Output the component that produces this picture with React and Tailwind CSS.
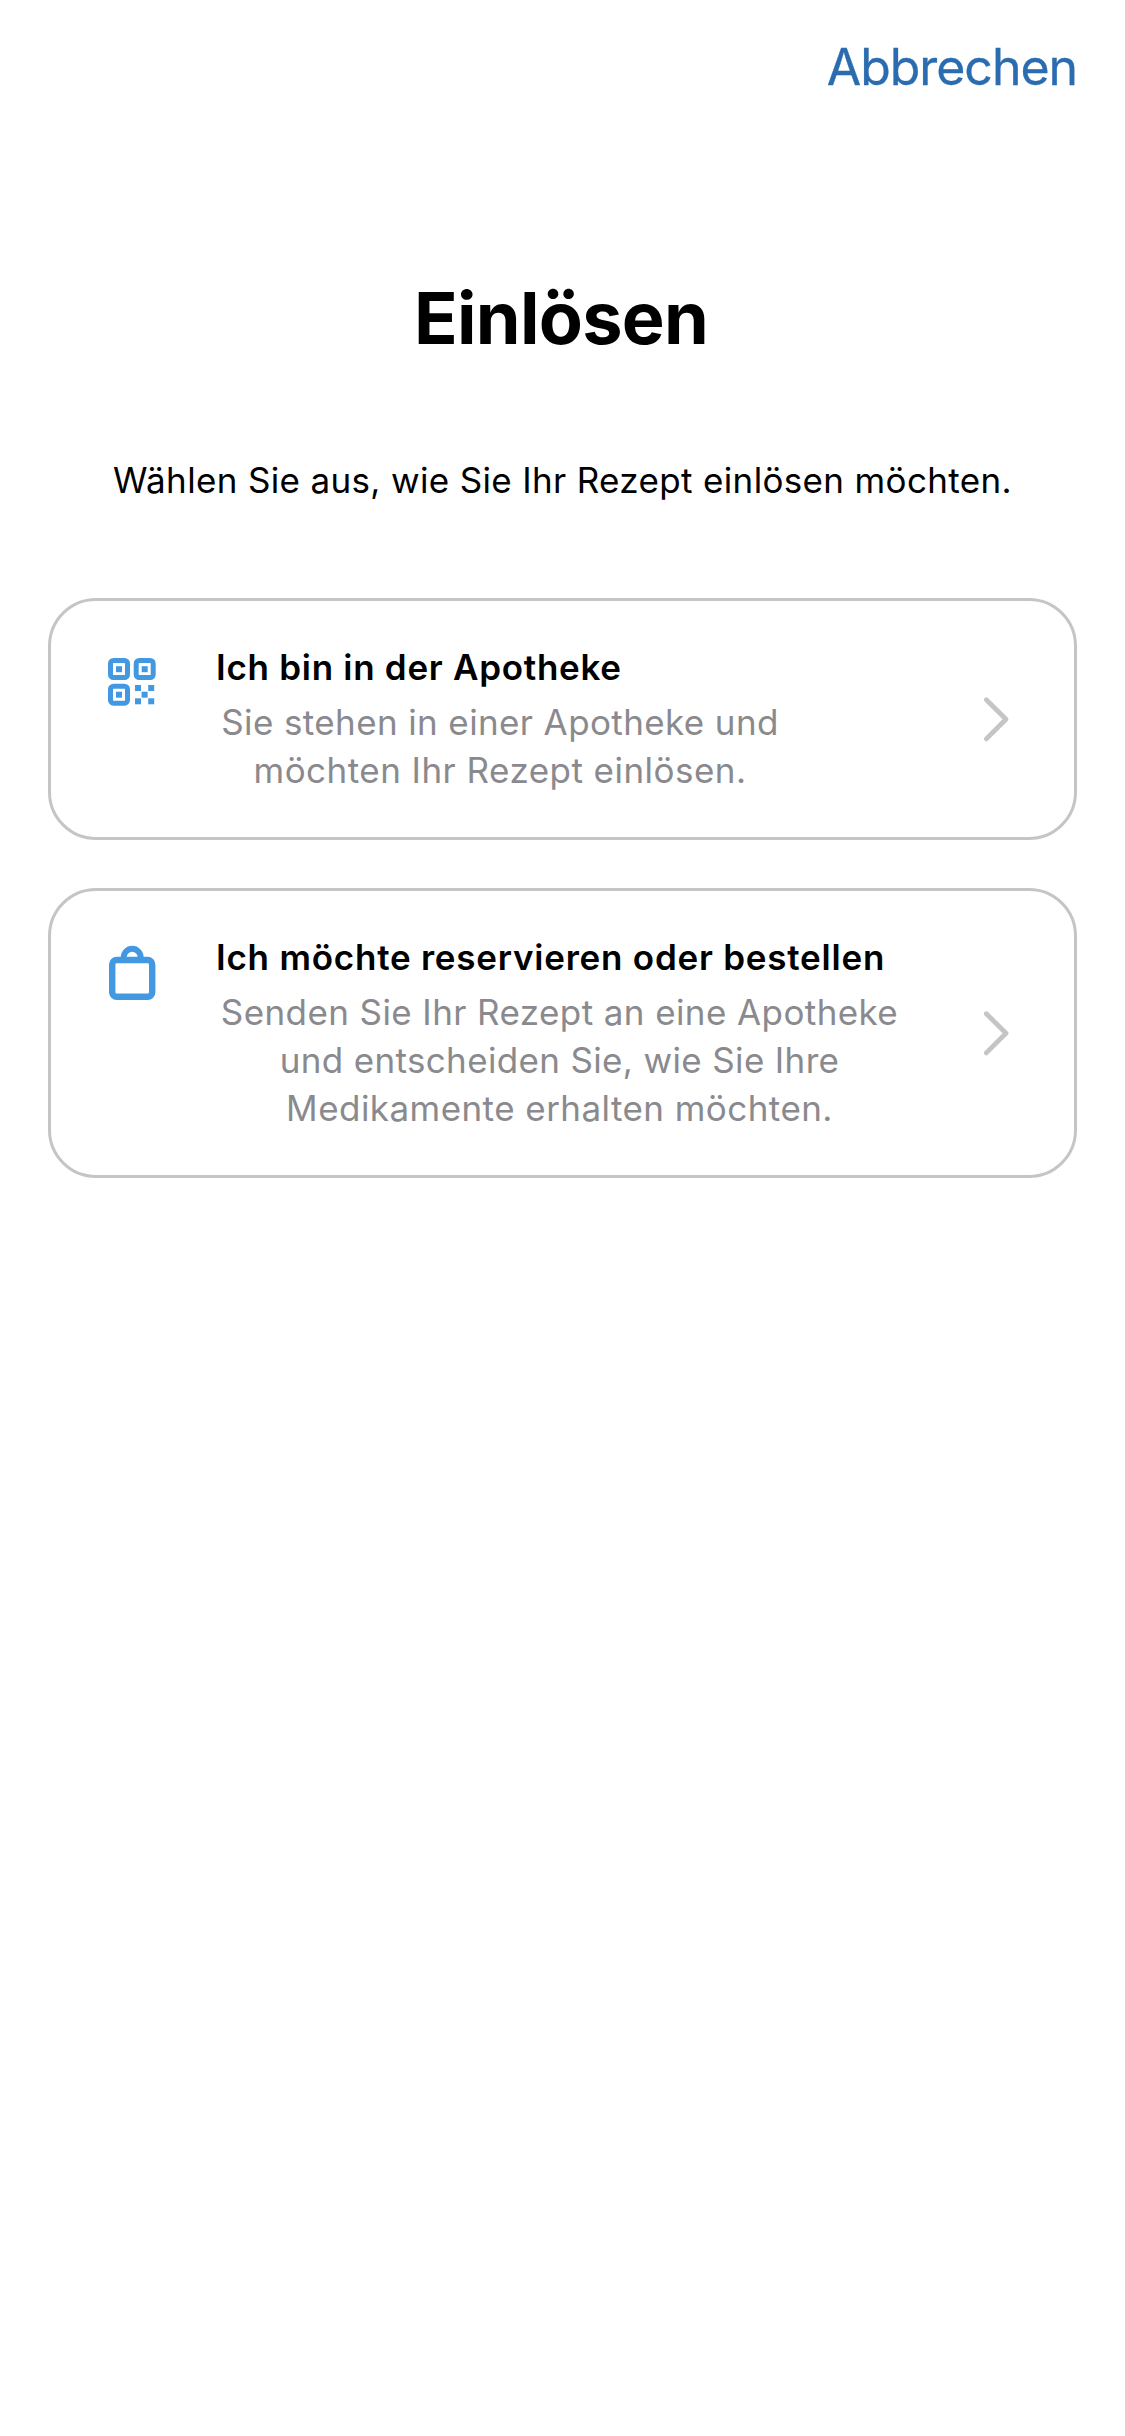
function QrIcon() {
  return (
    <svg width="48" height="48" viewBox="0 0 48 48" className="mt-[15px] shrink-0" fill="none">
      <g stroke="#4299e1" strokeWidth="5">
        <rect x="2.5" y="2.5" width="17" height="17" rx="3" />
        <rect x="28.2" y="2.5" width="17" height="17" rx="3" />
        <rect x="2.5" y="28.2" width="17" height="17" rx="3" />
      </g>
      <g fill="#4299e1">
        <rect x="8" y="8.2" width="6" height="6" />
        <rect x="33.7" y="8.2" width="6" height="6" />
        <rect x="8" y="33.7" width="6" height="6" />
        <rect x="27" y="27" width="6" height="6" />
        <rect x="40.2" y="27" width="6" height="6" />
        <rect x="33.6" y="33.7" width="6" height="6" />
        <rect x="27" y="40.3" width="6" height="6" />
        <rect x="40.2" y="40.3" width="6" height="6" />
      </g>
    </svg>
  );
}

function BagIcon() {
  return (
    <svg width="48" height="56" viewBox="0 0 48 56" className="mt-[12px] shrink-0" fill="none" stroke="#4299e1">
      <rect x="4.2" y="15" width="40" height="36.7" rx="4.5" strokeWidth="6.4" />
      <path d="M15.7 13.5v-1.2a8.5 8.5 0 0 1 17 0v1.2" strokeWidth="5.9" />
    </svg>
  );
}

function Chevron() {
  return (
    <svg
      width="28"
      height="48"
      viewBox="0 0 28 48"
      className="mr-[64px] ml-auto shrink-0 self-center"
      fill="none"
      stroke="#c5c5c7"
      strokeWidth="4.8"
      strokeLinecap="round"
      strokeLinejoin="round"
    >
      <path d="M4.3 4.7 24 24.3 4.3 43.9" />
    </svg>
  );
}

function OptionCard({ icon, title, titleClass, bodyClass, lines, className }) {
  return (
    <button
      className={`flex w-full items-start rounded-[48px] border-3 border-[#c5c5c5] pl-[57px] ${className}`}
    >
      <span className="flex w-[108px] shrink-0 pt-[42px]">{icon}</span>
      <span className="flex flex-col items-start gap-[7px] pt-[42px] whitespace-nowrap">
        <span className={`font-semibold ${titleClass}`}>{title}</span>
        <span className={`flex flex-col items-center text-[#8a8a8e] ${bodyClass}`}>
          {lines.map(([text, tracking]) => (
            <span key={text} className={tracking}>
              {text}
            </span>
          ))}
        </span>
      </span>
      <Chevron />
    </button>
  );
}

export default function App() {
  return (
    <div className="min-h-[2436px] w-full bg-white px-12 pt-[37px] font-['Inter',sans-serif] text-black">
      <header className="flex justify-end">
        <button className="text-[50px] leading-[60px] tracking-[-1.05px] text-[#2b6cb0] [-webkit-text-stroke:0.3px_#2b6cb0]">
          Abbrechen
        </button>
      </header>
      <main className="flex flex-col items-center text-[35px] leading-[48px]">
        <h1 className="mt-[177px] pr-[3px] text-[72px] leading-[88px] font-bold tracking-[-0.7px]">Einlösen</h1>
        <p className="mt-[94px] tracking-[0.345px] whitespace-nowrap">
          Wählen Sie aus, wie Sie Ihr Rezept einlösen möchten.
        </p>
        <div className="mt-[94px] flex w-full flex-col gap-12">
          <OptionCard
            icon={<QrIcon />}
            title="Ich bin in der Apotheke"
            titleClass="tracking-[0.72px]"
            bodyClass="w-[568px]"
            className="h-[242px]"
            lines={[
              ["Sie stehen in einer Apotheke und", "tracking-[0.38px]"],
              ["möchten Ihr Rezept einlösen.", "tracking-[0.46px]"],
            ]}
          />
          <OptionCard
            icon={<BagIcon />}
            title="Ich möchte reservieren oder bestellen"
            titleClass="tracking-[0.77px]"
            bodyClass="w-[687px]"
            className="h-[290px]"
            lines={[
              ["Senden Sie Ihr Rezept an eine Apotheke", "tracking-[0.405px]"],
              ["und entscheiden Sie, wie Sie Ihre", "tracking-[0.35px]"],
              ["Medikamente erhalten möchten.", "tracking-[0.44px]"],
            ]}
          />
        </div>
      </main>
    </div>
  );
}
